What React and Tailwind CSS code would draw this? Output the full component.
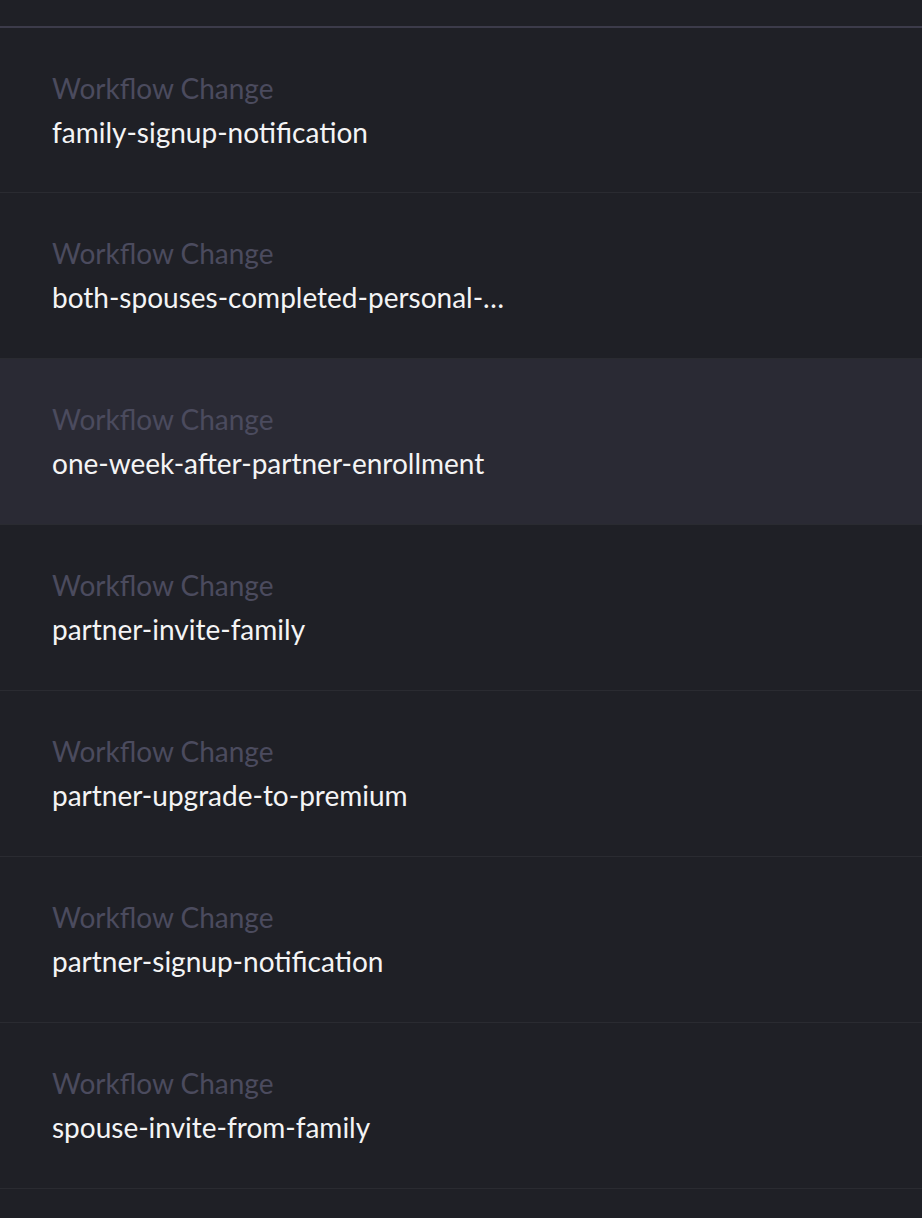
import React from 'react';

const rows = [
  'family-signup-notification',
  'both-spouses-completed-personal-information',
  'one-week-after-partner-enrollment',
  'partner-invite-family',
  'partner-upgrade-to-premium',
  'partner-signup-notification',
  'spouse-invite-from-family',
];

const App = () => {
  const active = 2;

  return (
    <div
      className="min-h-[1218px] w-full bg-[#1f2026] overflow-hidden"
      style={{ fontFamily: 'Lato, "Noto Sans", sans-serif' }}
    >
      <div className="h-[28px] border-b-2 border-[#3c3b4a]" />
      <ul>
        {rows.map((name, i) => (
          <li
            key={name}
            className={`${i === 0 ? 'h-[165px]' : 'h-[166px]'} border-b border-[#2a2b31] pl-[52px] pt-[38px] ${
              i === active ? 'bg-[#2a2a34] border-[#2a2a34]' : ''
            }`}
          >
            <div className="text-[28px] leading-[44px] text-[#4b4b5e]">Workflow Change</div>
            <div className="w-[454px] truncate text-[28px] leading-[44px] text-[#f4f4f5]">
              {name}
            </div>
          </li>
        ))}
      </ul>
    </div>
  );
};

export default App;
